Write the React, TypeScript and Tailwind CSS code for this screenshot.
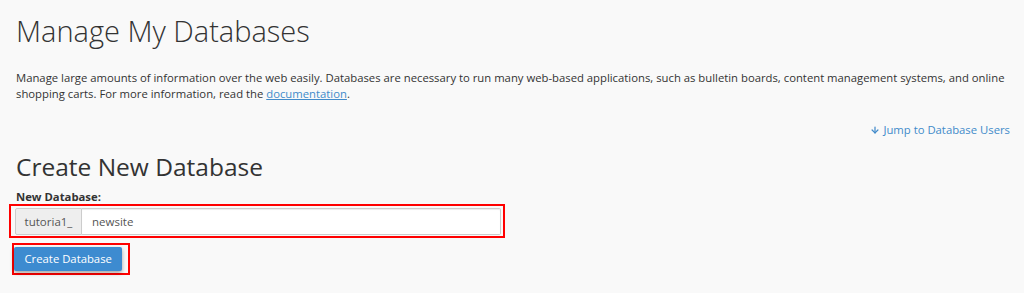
import { ArrowDown } from "lucide-react";

export default function App() {
  return (
    <div className="min-h-[293px] bg-[#f9f9f9] px-4 pt-[14px] font-['Open_Sans',sans-serif] text-[#333]">
      <h1 className="text-[29px] font-light leading-[33px] text-[#333]">Manage My Databases</h1>
      <p className="mt-[23px] text-[11.3px] leading-[16px] text-[#333]">
        Manage large amounts of information over the web easily. Databases are necessary to run many web-based applications, such as bulletin boards, content management systems, and online shopping carts. For more information, read the{" "}
        <a href="#" className="text-[#428bca] underline">documentation</a>.
      </p>
      <div className="mt-[20px] flex justify-end">
        <a href="#" className="mr-[-2px] flex items-center gap-[3px] text-[11.3px] leading-[16px] text-[#428bca]">
          <ArrowDown className="h-[10px] w-[10px]" strokeWidth={3} />
          Jump to Database Users
        </a>
      </div>
      <h2 className="mt-[15px] text-[24.5px] leading-[28px] text-[#333]">Create New Database</h2>
      <label className="mt-[9px] block text-[11.3px] font-bold leading-[14px] text-[#333]">New Database:</label>
      <div className="ml-[-7px] w-[496px] border-2 border-[#f00] pb-[1px] pl-[4px] pr-[2px] pt-[2px]">
        <div className="flex h-[27px] text-[11.5px] text-[#555]">
          <span className="flex w-[67px] items-center justify-center rounded-l-[2px] border border-[#ccc] bg-[#eee]">tutoria1_</span>
          <input
            readOnly
            value="newsite"
            className="flex-1 rounded-r-[2px] border border-l-0 border-[#ccc] bg-white px-[10px] text-[11.5px] text-[#555] shadow-[inset_0_1px_1px_rgba(0,0,0,0.075)] outline-none"
          />
        </div>
      </div>
      <div className="ml-[-4px] mt-[5px] inline-flex border-2 border-[#f00] py-[2px] pr-[6px]">
        <button className="h-[24px] rounded-[2px] bg-[#3d8bd0] px-[10.5px] text-[11.3px] text-white shadow-[0_2px_4px_rgba(0,0,0,0.35)]">
          Create Database
        </button>
      </div>
    </div>
  );
}
